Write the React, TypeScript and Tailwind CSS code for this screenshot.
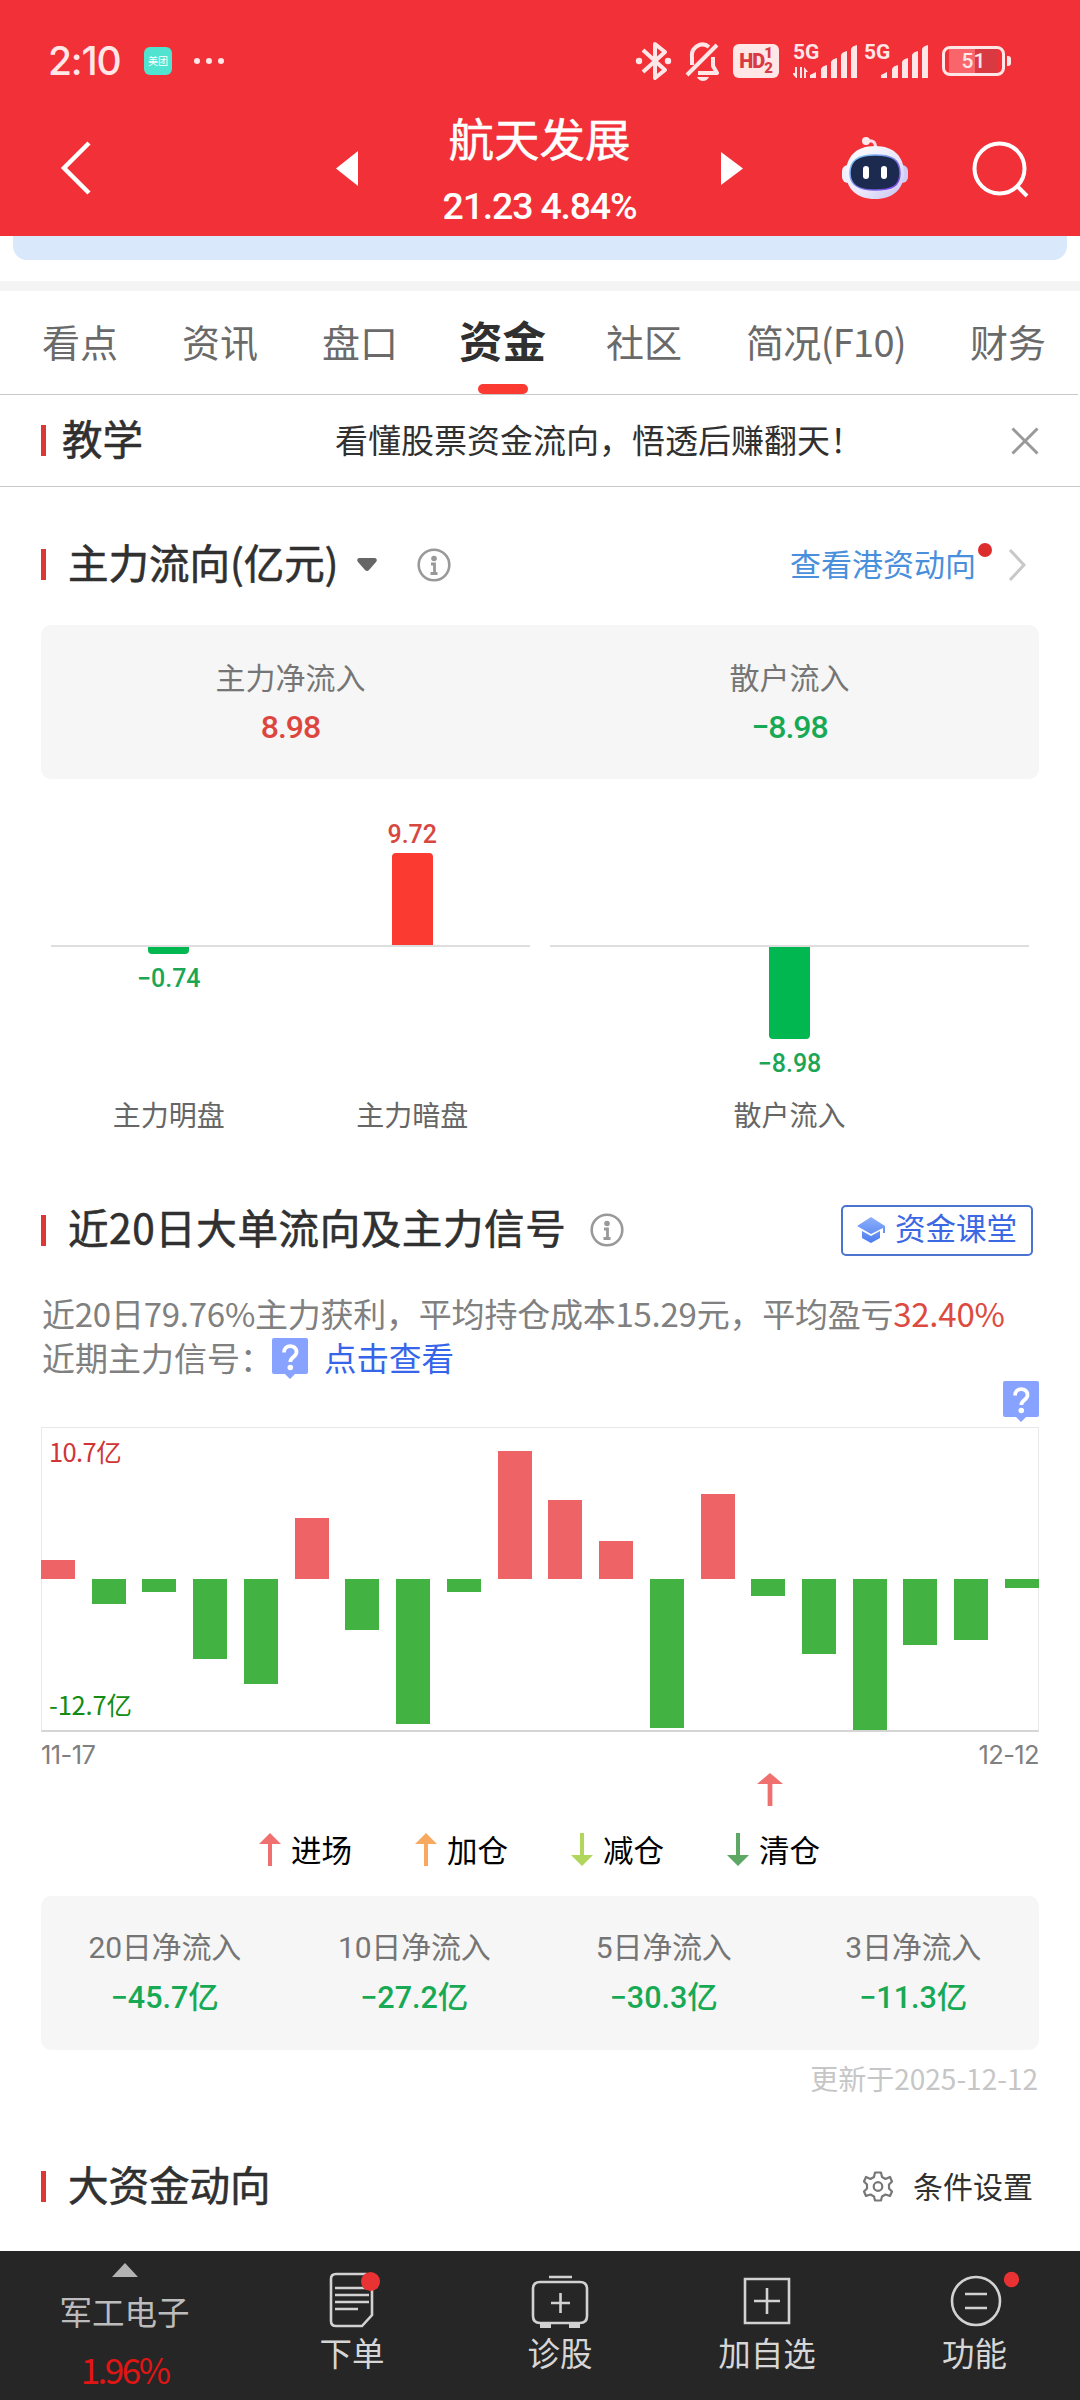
import React from 'react';

type Tone = 'up' | 'down';

const TABS = ['看点', '资讯', '盘口', '资金', '社区', '简况(F10)', '财务'];
const ACTIVE_TAB = '资金';

// Bar heights in px, positive above the zero line
const DAILY_FLOW = [
  19, -25, -13, -80, -105, 61, -51, -145, -13, 128, 79, 38, -149, 85, -17, -75, -152, -66, -61, -9,
];

const LEGEND = [
  { label: '进场', color: '#f07070', down: false },
  { label: '加仓', color: '#f9a95f', down: false },
  { label: '减仓', color: '#b0d75c', down: true },
  { label: '清仓', color: '#5ea765', down: true },
];

const NET_FLOW = [
  { label: '20日净流入', value: '−45.7' },
  { label: '10日净流入', value: '−27.2' },
  { label: '5日净流入', value: '−30.3' },
  { label: '3日净流入', value: '−11.3' },
];

const Signal: React.FC<{ data?: boolean }> = ({ data }) => (
  <div className="relative h-[40px] w-[66px]">
    <span className="absolute top-0 left-0 font-[Roboto,sans-serif] text-[21px] leading-[22px] font-bold">5G</span>
    <svg className="mt-[2px]" width="66" height="36" viewBox="0 0 66 36" fill="#ffe6e7">
      {data && <path d="M3 35l-4-5h3v-6h2v11zM7 24h2v11H7zM11 24l4 5h-2v6h-2z" />}
      <path d="M17 32l6-3v6h-6zM28 26q1-3 6-4v13h-6zM38 19q1-3 6-4v20h-6zM48 12q1-3 6-4v27h-6zM58 6q1-3 6-4v33h-6z" />
    </svg>
  </div>
);

const StatusBar: React.FC = () => (
  <div className="flex h-[100px] items-center pt-[22px] pl-[48px] text-[#ffe6e7]">
    <span className="w-[72px] font-[Inter,sans-serif] text-[39px] leading-[40px] font-medium tracking-[-1.2px]">2:10</span>
    <span className="ml-[24px] flex size-[28px] items-center justify-center rounded-[6px] bg-[#50e3d0] text-[10px] leading-[12px] text-white">
      美团
    </span>
    <span className="ml-[22px] flex gap-[6px]">
      <i className="size-[6px] rounded-full bg-[#ffe6e7]" />
      <i className="size-[6px] rounded-full bg-[#ffe6e7]" />
      <i className="size-[6px] rounded-full bg-[#ffe6e7]" />
    </span>
    <svg className="ml-[411px]" width="38" height="40" viewBox="0 0 38 40" fill="none" stroke="#ffe6e7" strokeWidth="4">
      <path d="M8 9l22 20-10 8V3l10 8L8 31" strokeLinejoin="round" />
      <circle cx="4" cy="20" r="3.2" fill="#ffe6e7" stroke="none" />
      <circle cx="33" cy="20" r="3.2" fill="#ffe6e7" stroke="none" />
    </svg>
    <svg className="ml-[12px]" width="36" height="40" viewBox="0 0 36 40" fill="none" stroke="#ffe6e7" strokeWidth="4">
      <path d="M2 34L32 4M7 24v-8a10.500 11 0 0 1 17-10M28 16v9l4 7H13" strokeLinejoin="round" />
      <path d="M12 36h12q-2 4-6 4t-6-4z" fill="#ffe6e7" stroke="none" />
    </svg>
    <span className="ml-[12px] flex h-[34px] w-[46px] items-center justify-center rounded-[6px] bg-[#ffe6e7] font-[Roboto,sans-serif] font-black text-[#d93a42]">
      <span className="text-[20px] leading-[20px] tracking-[-1px]">HD</span>
      <span className="flex flex-col text-[15px] leading-[15px]">
        <span>1</span>
        <span>2</span>
      </span>
    </span>
    <span className="ml-[14px] flex gap-[5px]">
      <Signal data />
      <Signal />
    </span>
    <span className="ml-[12px] flex h-[30px] w-[63px] items-center justify-center rounded-[8px] border-3 border-[#ffe6e7] bg-[linear-gradient(90deg,#f23038_4px,#f8666b_4px,#f8666b_30px,#d93a42_30px,#d93a42_53px,#f23038_53px)] bg-clip-padding font-[Roboto,sans-serif] text-[21px] leading-[22px] font-medium">
      51
    </span>
    <i className="ml-[2px] h-[10px] w-[4px] rounded-r-[3px] bg-[#ffe6e7]" />
  </div>
);

const Robot: React.FC = () => (
  <svg width="66" height="62" viewBox="0 0 66 62">
    <defs>
      <linearGradient id="shell" x1="0" y1="0" x2="1" y2="1">
        <stop offset="0" stopColor="#ffffff" />
        <stop offset="0.6" stopColor="#e9e6fb" />
        <stop offset="1" stopColor="#c3c0f0" />
      </linearGradient>
      <linearGradient id="rim" x1="0" y1="0" x2="1" y2="1">
        <stop offset="0" stopColor="#7fd4f5" />
        <stop offset="1" stopColor="#7a35e0" />
      </linearGradient>
    </defs>
    <path d="M24 4q10-2 9.500 7" fill="none" stroke="#ffd9e4" strokeWidth="3" />
    <circle cx="24" cy="4" r="4" fill="#ffe9ef" />
    <rect x="0" y="28" width="12" height="18" rx="6" fill="#f1effc" />
    <rect x="54" y="28" width="12" height="18" rx="6" fill="#cfccf5" />
    <path d="M33 9c19 0 29 11 29 27S51 62 33 62 4 52 4 36 14 9 33 9z" fill="url(#shell)" />
    <path d="M33 18c18 0 25 5 25 18S50 53 33 53 8 48 8 36s7-18 25-18z" fill="#1d2a50" stroke="url(#rim)" strokeWidth="1.500" />
    <rect x="21" y="29" width="6" height="13" rx="3" fill="#fff" />
    <rect x="39" y="29" width="6" height="13" rx="3" fill="#fff" />
  </svg>
);

const Header: React.FC = () => (
  <header className="h-[236px] shrink-0 bg-[#f23038] text-white">
    <StatusBar />
    <div className="flex h-[136px] items-center pl-[60px]">
      <svg width="32" height="56" viewBox="0 0 32 56" fill="none" stroke="#fff" strokeWidth="4.500">
        <path d="M29 3L4 28l25 25" />
      </svg>
      <svg className="ml-[244px]" width="22" height="36" viewBox="0 0 22 36" fill="#fff">
        <path d="M22 1v35L0 18.500z" />
      </svg>
      <div className="flex h-full w-[363px] flex-col items-center pt-[5px]">
        <h1 className="text-[45.500px] leading-[64px] [-webkit-text-stroke:0.5px]">航天发展</h1>
        <p className="mt-[17px] font-[Roboto,sans-serif] text-[37.500px] leading-[40px] font-medium tracking-[-1.2px]">21.23 4.84%</p>
      </div>
      <svg width="22" height="36" viewBox="0 0 22 36" fill="#fff">
        <path d="M0 2v33l22-16.500z" />
      </svg>
      <div className="ml-[99px] pb-px">
        <Robot />
      </div>
      <svg className="ml-[62px]" width="60" height="60" viewBox="0 0 60 60" fill="none" stroke="#fff" strokeWidth="4">
        <circle cx="29.500" cy="30.500" r="25" />
        <path d="M47 48l10 10" />
      </svg>
    </div>
  </header>
);

const SectionTitle: React.FC<{ children: React.ReactNode; className?: string }> = ({
  children,
  className = 'ml-[22px]',
}) => (
  <>
    <i className="h-[31px] w-[5px] bg-[#dc3836]" />
    <h2 className={`relative -top-[3px] text-[40.500px] leading-[56px] text-[#303030] [-webkit-text-stroke:0.6px] ${className}`}>{children}</h2>
  </>
);

const InfoIcon: React.FC<{ className: string }> = ({ className }) => (
  <svg className={className} width="34" height="34" viewBox="0 0 34 34" fill="none" stroke="#999" strokeWidth="2.600">
    <circle cx="17" cy="17" r="15.300" />
    <circle cx="17" cy="10.500" r="2.800" fill="#999" stroke="none" />
    <path d="M14 16h3.500v9M13.500 25.500h7" strokeWidth="2.800" />
  </svg>
);

const HelpBadge: React.FC<{ className?: string }> = ({ className = '' }) => (
  <svg className={className} width="36" height="42" viewBox="0 0 36 42">
    <path d="M2 0h32q2 0 2 2v32q0 2-2 2H23l-5 5-5-5H2q-2 0-2-2V2q0-2 2-2z" fill="#88a2ff" />
    <path d="M12 14.500c0-8.500 12.500-8.500 12.500-.5 0 5-6.200 5-6.200 10" fill="none" stroke="#fff" strokeWidth="3.800" />
    <circle cx="18.300" cy="29.500" r="2.800" fill="#fff" />
  </svg>
);

const Arrow: React.FC<{ color: string; down?: boolean; width?: number }> = ({ color, down, width = 22 }) => (
  <svg width={width} height="33" viewBox="0 0 22 33" preserveAspectRatio="none" fill={color}>
    <path d={down ? 'M9 0h4v22h9L11 33 0 22h9z' : 'M9 33V11H0L11 0l11 11h-9v22z'} />
  </svg>
);

const TabBar: React.FC = () => (
  <nav className="flex h-[104px] w-[1078px] shrink-0 gap-[64px] border-b border-[#c8c8c8] pl-[42px] text-[38px] whitespace-nowrap text-[#6a6a6a]">
    {TABS.map((tab) =>
      tab === ACTIVE_TAB ? (
        <div key={tab} className="-mr-[4px] -ml-[3px] flex flex-col items-center font-bold text-[#303030]">
          <span className="pt-[19px] text-[43.500px] leading-[60px]">{tab}</span>
          <i className="mt-[14px] h-[10px] w-[50px] rounded-full bg-[#fb3a32]" />
        </div>
      ) : (
        <span key={tab} className={`pt-[20px] leading-[60px] ${tab.length > 2 ? 'tracking-[-0.7px]' : ''}`}>
          {tab}
        </span>
      ),
    )}
  </nav>
);

const MiniBar: React.FC<{ value: string; label: string; tone: Tone; height: number }> = ({ value, label, tone, height }) => (
  <div className="flex flex-1 flex-col items-center">
    <div className="flex h-[126px] flex-col items-center justify-end">
      {tone === 'up' && (
        <>
          <span className="mb-[3px] font-[Roboto,sans-serif] text-[25px] leading-[30px] font-medium text-[#d8473f]">{value}</span>
          <i className="w-[41px] shrink-0 rounded-t-[4px] bg-[#fb3b32]" style={{ height }} />
        </>
      )}
    </div>
    <i className="h-[2px] w-full bg-[#dedede]" />
    <div className="flex h-[148px] flex-col items-center">
      {tone === 'down' && (
        <>
          <i className="w-[41px] rounded-b-[4px] bg-[#00b84f]" style={{ height }} />
          <span className="mt-[10px] font-[Roboto,sans-serif] text-[25px] leading-[30px] font-medium text-[#1ba656]">{value}</span>
        </>
      )}
    </div>
    <span className="text-[28px] leading-[39px] text-[#666]">{label}</span>
  </div>
);

const MainFlow: React.FC = () => (
  <section>
    <div className="flex h-[138px] items-center pt-[17px] pl-[41px]">
      <SectionTitle>主力流向(亿元)</SectionTitle>
      <svg className="ml-[19px]" width="20" height="13" viewBox="0 0 20 13" fill="#666">
        <path d="M2 0h16q3 1 1 4l-7 8q-2 2-4 0L1 4Q-1 1 2 0z" />
      </svg>
      <InfoIcon className="ml-[40px]" />
      <div className="ml-auto flex items-center pr-[54px]">
        <span className="relative -top-[2px] text-[31px] leading-[44px] text-[#4a8fdc]">
          查看港资动向
          <i className="absolute top-[2px] -right-[16px] size-[14px] rounded-full bg-[#dd2c2e]" />
        </span>
        <svg className="ml-[32px]" width="18" height="34" viewBox="0 0 18 34" fill="none" stroke="#c8c8c8" strokeWidth="3">
          <path d="M2 2l14 15L2 32" />
        </svg>
      </div>
    </div>

    <div className="mx-[41px] flex h-[154px] rounded-[10px] bg-[#f6f6f6] text-center">
      <div className="flex-1 pt-[31px]">
        <p className="text-[30px] leading-[40px] text-[#757575]">主力净流入</p>
        <p className="mt-[11px] font-[Roboto,sans-serif] text-[32px] leading-[40px] font-medium tracking-[-1px] text-[#dd463f]">8.98</p>
      </div>
      <div className="flex-1 pt-[31px]">
        <p className="text-[30px] leading-[40px] text-[#757575]">散户流入</p>
        <p className="mt-[11px] font-[Roboto,sans-serif] text-[32px] leading-[40px] font-medium tracking-[-1px] text-[#18a955]">−8.98</p>
      </div>
    </div>

    <div className="mt-[40px] flex gap-[20px] px-[51px]">
      <div className="w-[479px] overflow-hidden">
        <div className="-mx-[4px] flex">
          <MiniBar value="−0.74" label="主力明盘" tone="down" height={7} />
          <MiniBar value="9.72" label="主力暗盘" tone="up" height={92} />
        </div>
      </div>
      <div className="flex w-[479px]">
        <MiniBar value="−8.98" label="散户流入" tone="down" height={92} />
      </div>
    </div>
  </section>
);

const FlowChart: React.FC = () => (
  <div className="relative mx-[41px] h-[305px] border border-b-2 border-[#e8e8e8] border-b-[#d5d5d5]">
    <div className="-mx-px flex justify-between">
      {DAILY_FLOW.map((value, index) => (
        <div key={index} className="flex h-[302px] w-[34px] flex-col">
          <div className="flex h-[151px] items-end">
            {value > 0 && <i className="w-full bg-[#ee6365]" style={{ height: value }} />}
          </div>
          {value < 0 && <i className="w-full bg-[#42b242]" style={{ height: -value }} />}
        </div>
      ))}
    </div>
    <span className="absolute top-[5px] left-[7px] text-[25.500px] leading-[36px] tracking-[-0.6px] text-[#d03434]">10.7亿</span>
    <span className="absolute bottom-[8px] left-[7px] text-[25.500px] leading-[36px] tracking-[-0.2px] text-[#128c12]">-12.7亿</span>
  </div>
);

const SignalSection: React.FC = () => (
  <section>
    <div className="flex h-[72px] items-center pl-[41px]">
      <SectionTitle className="ml-[22px] tracking-[0.6px]">近20日大单流向及主力信号</SectionTitle>
      <InfoIcon className="ml-[24px]" />
      <div className="mr-[47px] ml-auto flex h-[51px] w-[192px] items-center rounded-[5px] border-2 border-[#4a74cf] pl-[14px]">
        <svg width="28" height="26" viewBox="0 0 28 26">
          <defs>
            <linearGradient id="cap" x1="0" y1="0" x2="0" y2="1">
              <stop offset="0" stopColor="#8db0fb" />
              <stop offset="1" stopColor="#4c7cf0" />
            </linearGradient>
          </defs>
          <path d="M14 0l14 9v7h-2v-5l-12 6L0 9zM5 14l9 5 9-5v7l-9 5-9-5z" fill="url(#cap)" />
        </svg>
        <span className="relative -top-[3px] ml-[10px] text-[30.500px] leading-[40px] text-[#3c68e4]">资金课堂</span>
      </div>
    </div>

    <div className="pt-[25px] pl-[42px] text-[33px] leading-[44px] whitespace-nowrap text-[#808080]">
      <p className="tracking-[-0.24px]">
        近20日79.76%主力获利，平均持仓成本15.29元，平均盈亏<span className="text-[#dd4a40]">32.40%</span>
      </p>
      <div className="flex">
        <span className="w-[230px]">近期主力信号：</span>
        <HelpBadge className="mt-[3px]" />
        <span className="ml-[16px] text-[32.500px] text-[#3765ea]">点击查看</span>
      </div>
    </div>
    <div className="flex justify-end pt-px pr-[41px] pb-[4px]">
      <HelpBadge />
    </div>

    <FlowChart />
    <div className="flex justify-between px-[41px] pt-[5px] font-[Inter,sans-serif] text-[25.500px] leading-[36px] tracking-[-0.6px] text-[#808080]">
      <span>11-17</span>
      <span>12-12</span>
    </div>
    <div className="flex pl-[757px]">
      <Arrow color="#f07070" width={26} />
    </div>
    <div className="mt-[19px] flex h-[49px] items-center gap-[62px] pl-[259px] text-black">
      {LEGEND.map(({ label, color, down }) => (
        <div key={label} className="flex w-[94px] items-center gap-[10px]">
          <Arrow color={color} down={down} />
          <span className="relative -top-[1px] text-[30.500px] leading-[40px] whitespace-nowrap">{label}</span>
        </div>
      ))}
    </div>

    <div className="mx-[41px] mt-[22px] flex h-[154px] rounded-[10px] bg-[#f6f6f6] text-center">
      {NET_FLOW.map(({ label, value }) => (
        <div key={label} className="flex-1 pt-[32px] pr-[2px]">
          <p className="font-[Roboto,'Noto_Sans_CJK_SC',sans-serif] text-[30px] leading-[40px] tracking-[-0.2px] text-[#757575]">{label}</p>
          <p className="mt-[10px] font-[Roboto,'Noto_Sans_CJK_SC',sans-serif] text-[30.500px] leading-[40px] font-medium text-[#18a955]">
            {value}亿
          </p>
        </div>
      ))}
    </div>
    <p className="pt-[8px] pr-[42px] text-right text-[28px] leading-[40px] text-[#c6c6c6]">更新于2025-12-12</p>
  </section>
);

const FundSection: React.FC = () => (
  <section className="flex h-[154px] items-center pt-[24px] pr-[47px] pl-[41px]">
    <SectionTitle>大资金动向</SectionTitle>
    <svg className="ml-auto" width="30" height="31" viewBox="0 0 30 31" fill="none" stroke="#777" strokeWidth="2.200">
      <path
        d="M12 1.500h6l1 4.500 3.500 2 4.500-2 2 4.500-3 3v4l3 3-2 4.500-4.500-1.500-3.500 2-1 4h-6l-1-4-3.500-2L3 25l-2-4.500 3-3v-4l-3-3L3 6l4.500 2L11 6z"
        strokeLinejoin="round"
      />
      <circle cx="15" cy="15.500" r="4.300" />
    </svg>
    <span className="relative -top-[2px] ml-[20px] text-[30px] leading-[40px] text-[#303030]">条件设置</span>
  </section>
);

const FooterItem: React.FC<{ label: string; className: string; children: React.ReactNode }> = ({
  label,
  className,
  children,
}) => (
  <div className={`flex shrink-0 flex-col items-center pt-[18px] ${className}`}>
    <svg width="90" height="62" viewBox="0 0 90 62" fill="none" stroke="#d2d2d2" strokeWidth="2.600">
      {children}
    </svg>
    <span className="text-[32.500px] leading-[42px] text-[#d6d6d6]">{label}</span>
  </div>
);

const Footer: React.FC = () => (
  <footer className="flex h-[149px] shrink-0 bg-[#262626]">
    <div className="flex w-[249px] shrink-0 flex-col items-center pt-[12px]">
      <svg width="26" height="14" viewBox="0 0 26 14" fill="#b3b3b3">
        <path d="M13 0l13 14H0z" />
      </svg>
      <span className="mt-[13px] text-[32.500px] leading-[42px] text-[#bcbcbc]">军工电子</span>
      <span className="mt-[15px] text-[35px] leading-[44px] tracking-[-2.5px] text-[#e01515]">1.96%</span>
    </div>
    <FooterItem label="下单" className="w-[206px]">
      <path d="M27 6h30q6 0 6 6v35L53 58H27q-5 0-5-5V11q0-5 5-5z" transform="translate(2 -1)" />
      <path d="M29 19h34M29 26h34M29 33h34M29 40h23" transform="translate(-1 0)" />
      <circle cx="63.500" cy="12.500" r="9.500" fill="#e83234" stroke="none" />
    </FooterItem>
    <FooterItem label="诊股" className="w-[210px]">
      <path d="M34 8h23M25 13h40q7 0 7 7v27q0 7-7 7H25q-7 0-7-7V20q0-7 7-7zM36 34h19M45.500 24v20" />
      <path d="M25 57h11M54 57h11" strokeWidth="4" />
    </FooterItem>
    <FooterItem label="加自选" className="w-[204px]">
      <path d="M23 10h44v44H23zM32 32h26M45 19v26" />
    </FooterItem>
    <FooterItem label="功能" className="w-[211px]">
      <circle cx="46" cy="32" r="24" />
      <path d="M35 25h22M35 39h22" />
      <circle cx="81.500" cy="10.500" r="7.700" fill="#e83234" stroke="none" />
    </FooterItem>
  </footer>
);

const App: React.FC = () => (
  <div className="flex h-[2400px] w-[1080px] flex-col overflow-hidden bg-white font-['Noto_Sans_CJK_SC',sans-serif]">
    <Header />
    <div className="mx-[13px] h-[24px] shrink-0 rounded-b-[14px] bg-[#d9e8fb]" />
    <div className="mt-[21px] h-[10px] shrink-0 bg-[#f4f4f4]" />
    <TabBar />
    <div className="flex h-[92px] shrink-0 items-center border-b border-[#c8c8c8] pl-[41px]">
      <SectionTitle className="ml-[16px]">教学</SectionTitle>
      <p className="relative -top-[2px] ml-[192px] w-[540px] text-[33px] leading-[44px] whitespace-nowrap text-[#303030]">
        看懂股票资金流向，悟透后赚翻天！
      </p>
      <svg className="ml-[136px]" width="28" height="28" viewBox="0 0 28 28" stroke="#999" strokeWidth="3">
        <path d="M1.500 1.500l25 25M26.500 1.500l-25 25" />
      </svg>
    </div>
    <MainFlow />
    <div className="h-[60px] shrink-0" />
    <SignalSection />
    <FundSection />
    <Footer />
  </div>
);

export default App;
